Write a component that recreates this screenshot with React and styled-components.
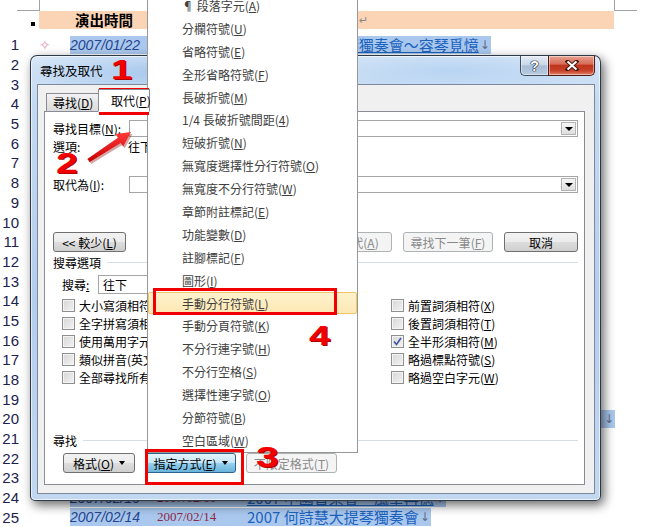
import React from 'react';
import styled, { createGlobalStyle, css } from 'styled-components';

const GlobalStyle = createGlobalStyle`
  html, body { margin: 0; padding: 0; background: #fff; }
  body {
    width: 665px;
    height: 527px;
    overflow: hidden;
    font-family: "Noto Sans CJK TC", "Liberation Sans", sans-serif;
  }
`;

const Screen = styled.div`
  position: relative;
  width: 665px;
  height: 527px;
  overflow: hidden;
  background: #fff;
`;

/* ---------- document behind the dialog ---------- */

const Doc = styled.div`
  display: flex;
  flex-direction: column;
`;

const Corners = styled.div`
  display: flex;
  justify-content: space-between;
  height: 11px;
  padding: 0 28px 0 17px;
`;

const Corner = styled.div`
  width: 22px;
  height: 10px;
  border-bottom: 1px solid #a3a3a3;
  ${p => p.$right
    ? css`border-left: 1px solid #a3a3a3;`
    : css`border-right: 1px solid #a3a3a3;`}
`;

const HeadRow = styled.div`
  display: flex;
  height: 18px;
`;

const Bullet = styled.div`
  width: 39px;
  display: flex;
  justify-content: flex-end;
  align-items: flex-end;
  padding: 0 4px 3px 0;
  box-sizing: border-box;
  &::after {
    content: '';
    width: 4px;
    height: 4px;
    background: #000;
  }
`;

const HeadBand = styled.div`
  width: 575px;
  display: flex;
  align-items: center;
  background: #fad4b5;
  padding-left: 36px;
  box-sizing: border-box;
`;

const HeadText = styled.span`
  width: 284px;
  font: bold 14.5px "Noto Sans CJK TC", sans-serif;
  line-height: 18px;
`;

const Return = styled.span`
  font: 11px "DejaVu Sans", sans-serif;
  color: #8a8a8a;
`;

const Rows = styled.div`
  display: flex;
  flex-direction: column;
  margin-top: 6px;
`;

const Row = styled.div`
  display: flex;
  align-items: center;
  height: 19.7px;
  flex: none;
`;

const LineNo = styled.span`
  width: 19px;
  margin-right: 20px;
  text-align: right;
  font: 15px "Liberation Sans", sans-serif;
  color: #1b2150;
  flex: none;
`;

const Marker = styled.span`
  width: 31px;
  flex: none;
  color: #e79cb2;
  font: 14px "DejaVu Sans", sans-serif;
`;

const Sel = styled.div`
  display: flex;
  align-items: center;
  height: 18px;
  background: #aac8ee;
  ${p => p.$wide && css`
    width: 545px;
    justify-content: flex-end;
  `}
`;

const Date1 = styled.span`
  width: 87px;
  flex: none;
  font: italic 14px "Liberation Sans", sans-serif;
  color: #24458f;
`;

const Date2 = styled.span`
  width: 90px;
  flex: none;
  font: 13px "Liberation Serif", serif;
  color: #8a2846;
`;

const Show = styled.span`
  white-space: nowrap;
  font: 15px "Noto Sans CJK TC", sans-serif;
  line-height: 18px;
  color: #1c63bd;
  text-decoration: ${p => (p.$u ? 'underline' : 'none')};
`;

const Down = styled.span`
  flex: none;
  font: 12px "DejaVu Sans", sans-serif;
  color: #5d6f86;
  padding: 0 1px;
`;

/* ---------- dialog window ---------- */

const Window = styled.div`
  position: absolute;
  left: 30px;
  top: 55px;
  width: 571px;
  height: 446px;
  box-sizing: border-box;
  border: 1px solid rgba(30, 40, 52, 0.9);
  border-radius: 7px 7px 5px 5px;
  background:
    radial-gradient(ellipse 140px 26px at 130px 16px, rgba(140, 182, 232, 0.6), transparent),
    radial-gradient(ellipse 160px 24px at 420px 14px, rgba(160, 198, 240, 0.5), transparent),
    linear-gradient(180deg, #d8e7f7 0%, #c4daf2 10%, #b4cdec 55%, #c2d8f1 100%);
  box-shadow: inset 0 0 0 1px rgba(255, 255, 255, 0.6), 3px 4px 11px rgba(0, 0, 0, 0.6);
  padding: 0 5px 6px 6px;
  display: flex;
  flex-direction: column;
  font: 12px "Noto Sans CJK TC", sans-serif;
  color: #000;
  white-space: nowrap;
`;

const TitleBar = styled.div`
  height: 28px;
  display: flex;
  justify-content: space-between;
  align-items: flex-start;
`;

const Caption = styled.span`
  line-height: 29px;
  padding-left: 3px;
  font-size: 12.5px;
`;

const Controls = styled.div`
  display: flex;
`;

const CtlBtn = styled.div`
  height: 19px;
  display: flex;
  align-items: center;
  justify-content: center;
  border: 1px solid #3f4c5c;
  border-top: none;
  box-shadow: inset 0 0 0 1px rgba(255, 255, 255, 0.45);
  ${p => p.$close
    ? css`
        width: 45px;
        border-color: #4e1a12;
        border-radius: 0 0 5px 0;
        background: linear-gradient(180deg, #e9a291 0%, #d66c56 42%, #c0341c 50%, #c8412a 78%, #e0826a 100%);
      `
    : css`
        width: 27px;
        border-right: none;
        border-radius: 0 0 0 5px;
        background: linear-gradient(180deg, #e4ecf5 0%, #c8d7e8 46%, #a8bdd5 52%, #b7cbe1 100%);
      `}
`;

const HelpGlyph = styled.span`
  font: bold 14px "Liberation Sans", sans-serif;
  color: #fff;
  text-shadow: 0 0 1px #1f2833, 0 0 1px #1f2833, 0 0 1px #1f2833, 0 0 1px #1f2833;
`;

const Client = styled.div`
  flex: 1;
  background: #f0f0f0;
  border: 1px solid #7a8a9c;
  padding: 4px 9px 8px 6px;
  display: flex;
  flex-direction: column;
`;

const Tabs = styled.div`
  display: flex;
  align-items: flex-end;
  height: 23px;
  padding-left: 2px;
  margin-bottom: -1px;
  position: relative;
  z-index: 1;
`;

const Tab = styled.div`
  box-sizing: border-box;
  border: 1px solid #898c95;
  width: 52px;
  line-height: 17px;
  ${p => p.$on
    ? css`
        height: 23px;
        padding: 2px 0 0 12px;
        background: #fff;
        border-bottom-color: #fff;
      `
    : css`
        height: 19px;
        padding-left: 6px;
        background: linear-gradient(180deg, #f3f3f3 0%, #e6e6e6 50%, #dadada 100%);
        border-right: none;
      `}
`;

const Panel = styled.div`
  flex: 1;
  background: #fff;
  border: 1px solid #898c95;
  padding: 8px 6px 0 8px;
  display: flex;
  flex-direction: column;
`;

const FieldRow = styled.div`
  display: flex;
  align-items: center;
  height: ${p => p.$h || 17}px;
  margin-top: ${p => p.$mt || 0}px;
  padding-left: ${p => p.$indent || 0}px;
  flex: none;
`;

const Label = styled.span`
  width: ${p => p.$w || 76}px;
  flex: none;
`;

const Combo = styled.div`
  flex: 1;
  height: 17px;
  box-sizing: border-box;
  border: 1px solid #a5a5a5;
  background: #fff;
  display: flex;
  justify-content: flex-end;
  padding: 1px;
`;

const DropBtn = styled.div`
  width: 15px;
  box-sizing: border-box;
  border: 1px solid #b4b4b4;
  background: linear-gradient(180deg, #f6f6f6, #dedede);
  display: flex;
  align-items: center;
  justify-content: center;
  &::after {
    content: '';
    border-left: 4px solid transparent;
    border-right: 4px solid transparent;
    border-top: 4px solid #000;
  }
`;

const Btn = styled.div`
  width: ${p => p.$w}px;
  height: 20px;
  box-sizing: border-box;
  flex: none;
  border: 1px solid #707070;
  border-radius: 3px;
  display: flex;
  align-items: center;
  justify-content: center;
  gap: 5px;
  background: linear-gradient(180deg, #f2f2f2 0%, #ebebeb 50%, #dddddd 51%, #cfcfcf 100%);
  ${p => p.$off && css`
    border-color: #adb2b5;
    background: #f4f4f4;
    color: #8a8a8a;
  `}
  ${p => p.$pressed && css`
    border-color: #2c628b;
    background: linear-gradient(180deg, #e5f4fc 0%, #c4e5f6 50%, #98d1ef 51%, #68b3db 100%);
  `}
`;

const Caret = styled.span`
  border-left: 3.5px solid transparent;
  border-right: 3.5px solid transparent;
  border-top: 4px solid #000;
`;

const Grow = styled.div`
  flex: 1;
`;

const ButtonRow = styled.div`
  display: flex;
  align-items: center;
  gap: ${p => p.$gap || 11}px;
  height: 20px;
  margin-top: ${p => p.$mt || 0}px;
  padding-left: ${p => p.$indent || 0}px;
  flex: none;
`;

const Group = styled.div`
  display: flex;
  align-items: center;
  height: 16px;
  margin-top: ${p => p.$mt || 0}px;
  flex: none;
  &::after {
    content: '';
    flex: 1;
    margin: 1px 0 0 6px;
    border-top: 1px solid #d5dfe5;
  }
`;

const Select = styled.div`
  width: 110px;
  height: 19px;
  box-sizing: border-box;
  border: 1px solid #a5a5a5;
  padding-left: 4px;
  display: flex;
  align-items: center;
`;

const Checks = styled.div`
  display: grid;
  grid-template-columns: 329px 1fr;
  grid-auto-flow: column;
  grid-template-rows: repeat(5, 18px);
  margin-top: 2px;
  padding-left: 9px;
  flex: none;
`;

const Check = styled.div`
  display: flex;
  align-items: center;
  gap: 4px;
`;

const Box = styled.span`
  width: 13px;
  height: 13px;
  box-sizing: border-box;
  border: 1px solid #8e8f8f;
  box-shadow: inset 0 0 0 1px #f4f4f4;
  background: linear-gradient(135deg, #d6d6d6 0%, #f3f3f3 100%);
  display: flex;
  align-items: center;
  justify-content: center;
`;

/* ---------- dropdown menu ---------- */

const Menu = styled.div`
  position: absolute;
  left: 147px;
  top: -7px;
  width: 211px;
  box-sizing: border-box;
  border: 1px solid #979797;
  background: #fff;
  display: flex;
  flex-direction: column;
  font: 12px "Noto Sans CJK TC", sans-serif;
  color: #3e3e3e;
  white-space: nowrap;
`;

const Item = styled.div`
  height: 22.9px;
  box-sizing: border-box;
  display: flex;
  align-items: center;
  padding-left: 33px;
  border: 1px solid transparent;
  ${p => p.$hot && css`
    border-color: #efc666;
    border-radius: 2px;
    background: linear-gradient(180deg, #fef2cc 0%, #fde8b4 100%);
  `}
`;

/* ---------- red annotations ---------- */

const Mark = styled.div`
  position: absolute;
  left: ${p => p.$x}px;
  top: ${p => p.$y}px;
  width: ${p => p.$w}px;
  height: ${p => p.$h}px;
  box-sizing: border-box;
  border: 3px solid #f00000;
`;

const Step = styled.span`
  position: absolute;
  left: ${p => p.$x}px;
  top: ${p => p.$y}px;
  font: bold ${p => p.$size}px "Liberation Sans", sans-serif;
  line-height: 1;
  color: #f20000;
  transform: scaleX(1.35);
  transform-origin: left top;
  text-shadow: 1px 1px 0 #b00000;
`;

const Pointer = styled.svg`
  position: absolute;
  left: 80px;
  top: 125px;
  overflow: visible;
`;

/* rows 2-19 and 21-23 lie fully under the dialog, only their numbers show */
const rows = [
  ['2007/01/22', '2007/01/22', '2007 何詩慧提琴獨奏會～容琴覓憶', true],
  null, null, null, null, null, null, null, null, null,
  null, null, null, null, null, null, null, null, null,
  ['wide'],
  null, null, null,
  ['2007/02/10', '2007/02/10', '2007 中國音樂會～風華再憶', true],
  ['2007/02/14', '2007/02/14', '2007 何詩慧大提琴獨奏會', false],
];

const menuItems = [
  ['¶ 段落字元', 'A'], ['分欄符號', 'U'], ['省略符號', 'E'], ['全形省略符號', 'F'],
  ['長破折號', 'M'], ['1/4 長破折號間距', '4'], ['短破折號', 'N'],
  ['無寬度選擇性分行符號', 'O'], ['無寬度不分行符號', 'W'], ['章節附註標記', 'E'],
  ['功能變數', 'D'], ['註腳標記', 'F'], ['圖形', 'I'], ['手動分行符號', 'L'],
  ['手動分頁符號', 'K'], ['不分行連字號', 'H'], ['不分行空格', 'S'],
  ['選擇性連字號', 'O'], ['分節符號', 'B'], ['空白區域', 'W'],
];

const leftChecks = [
  ['大小寫須相符', 'H'], ['全字拼寫須相符', 'Y'], ['使用萬用字元', 'U'],
  ['類似拼音(英文)', 'K'], ['全部尋找所有字形(英文)', 'W'],
];
const rightChecks = [
  ['前置詞須相符', 'X'], ['後置詞須相符', 'T'], ['全半形須相符', 'M', true],
  ['略過標點符號', 'S'], ['略過空白字元', 'W'],
];

const Key = ({ k }) => (<>(<u>{k}</u>)</>);

const Tick = () => (
  <svg width="9" height="9" viewBox="0 0 9 9">
    <path d="M1 4.5 L3.5 7.5 L8 1" fill="none" stroke="#3d56a6" strokeWidth="1.6" />
  </svg>
);

const CheckItem = ({ label, k, on }) => (
  <Check>
    <Box>{on && <Tick />}</Box>
    <span>{label}<Key k={k} /></span>
  </Check>
);

const DocRow = ({ n, data }) => {
  let body = null;
  if (data && data[0] === 'wide') {
    body = <Sel $wide><Down>↓</Down></Sel>;
  } else if (data) {
    const [a, b, t, u] = data;
    body = (
      <Sel>
        <Date1>{a}</Date1>
        <Date2>{b}</Date2>
        <Show $u={u}>{t}</Show>
        <Down>↓</Down>
      </Sel>
    );
  }
  return (
    <Row>
      <LineNo>{n}</LineNo>
      <Marker>{n === 1 ? '✧' : ''}</Marker>
      {body}
    </Row>
  );
};

export default function App() {
  return (
    <Screen>
      <GlobalStyle />

      <Doc>
        <Corners>
          <Corner />
          <Corner $right />
        </Corners>
        <HeadRow>
          <Bullet />
          <HeadBand>
            <HeadText>演出時間</HeadText>
            <Return>↵</Return>
          </HeadBand>
        </HeadRow>
        <Rows>
          {rows.map((d, i) => <DocRow key={i} n={i + 1} data={d} />)}
        </Rows>
      </Doc>

      <Window>
        <TitleBar>
          <Caption>尋找及取代</Caption>
          <Controls>
            <CtlBtn><HelpGlyph>?</HelpGlyph></CtlBtn>
            <CtlBtn $close>
              <svg width="14" height="11" viewBox="0 0 14 11">
                <path d="M2.5 1.5 L11.5 9.5 M11.5 1.5 L2.5 9.5" stroke="#4a1a12" strokeWidth="4" strokeLinecap="square" />
                <path d="M2.5 1.5 L11.5 9.5 M11.5 1.5 L2.5 9.5" stroke="#fff" strokeWidth="2" />
              </svg>
            </CtlBtn>
          </Controls>
        </TitleBar>

        <Client>
          <Tabs>
            <Tab>尋找<Key k="D" /></Tab>
            <Tab $on>取代<Key k="P" /></Tab>
          </Tabs>
          <Panel>
            <FieldRow>
              <Label>尋找目標<Key k="N" />:</Label>
              <Combo><DropBtn /></Combo>
            </FieldRow>
            <FieldRow $h={18}>
              <Label $w={75}>選項:</Label>
              <span>往下</span>
            </FieldRow>
            <FieldRow $mt={21}>
              <Label>取代為<Key k="I" />:</Label>
              <Combo><DropBtn /></Combo>
            </FieldRow>

            <ButtonRow $mt={39}>
              <Btn $w={73}><span>&lt;&lt; 較少<Key k="L" /></span></Btn>
              <Grow />
              <Btn $w={90} $off><span>全部取代<Key k="A" /></span></Btn>
              <Btn $w={90} $off><span>尋找下一筆<Key k="F" /></span></Btn>
              <Btn $w={74}>取消</Btn>
            </ButtonRow>

            <Group $mt={2}>搜尋選項</Group>
            <FieldRow $h={19} $mt={5} $indent={9}>
              <Label $w={36}>搜尋<u>:</u></Label>
              <Select>往下</Select>
            </FieldRow>
            <Checks>
              {leftChecks.map(([l, k]) => <CheckItem key={l} label={l} k={k} />)}
              {rightChecks.map(([l, k, on]) => <CheckItem key={l} label={l} k={k} on={on} />)}
            </Checks>

            <Group $mt={46}>尋找</Group>
            <ButtonRow $mt={5} $indent={10} $gap={10}>
              <Btn $w={72}><span>格式<Key k="O" /></span><Caret /></Btn>
              <Btn $w={91} $pressed><span>指定方式<Key k="E" /></span><Caret /></Btn>
              <Btn $w={91} $off><span>不限定格式<Key k="T" /></span></Btn>
            </ButtonRow>
          </Panel>
        </Client>
      </Window>

      <Menu>
        {menuItems.map(([t, k], i) => (
          <Item key={i} $hot={i === 13}><span>{t}<Key k={k} /></span></Item>
        ))}
      </Menu>

      <Mark $x={99} $y={88} $w={50} $h={27} />
      <Mark $x={153} $y={288} $w={184} $h={27} />
      <Mark $x={145} $y={449} $w={99} $h={36} />

      <Step $x={111} $y={56} $size={28}>1</Step>
      <Step $x={56} $y={149} $size={29}>2</Step>
      <Step $x={256} $y={442} $size={30}>3</Step>
      <Step $x={309} $y={322} $size={28}>4</Step>

      <Pointer width="60" height="45" viewBox="0 0 60 45">
        <defs>
          <linearGradient id="arrowFill" x1="0" y1="0" x2="0" y2="1">
            <stop offset="0" stopColor="#ff3a3a" />
            <stop offset="1" stopColor="#c80000" />
          </linearGradient>
        </defs>
        <polygon
          points="9.7,37 40.7,17.9 43.2,21.6 51,7 35.5,8.9 37.9,12.7 7.3,34"
          fill="#8a0000"
          opacity="0.35"
          transform="translate(1.5,2)"
        />
        <polygon
          points="9.7,37 40.7,17.9 43.2,21.6 51,7 35.5,8.9 37.9,12.7 7.3,34"
          fill="url(#arrowFill)"
        />
      </Pointer>
    </Screen>
  );
}
